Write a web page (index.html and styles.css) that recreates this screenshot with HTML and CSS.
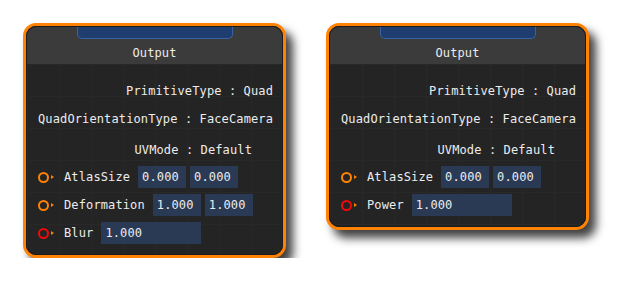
FILE: index.html
```html
<!DOCTYPE html>
<html lang="en">
<head>
    <meta charset="UTF-8">
    <meta name="viewport" content="width=device-width, initial-scale=1.0">
    <title>Output nodes</title>
    <link rel="stylesheet" href="styles.css">
</head>
<body>
    <div class="canvas">

        <div class="node">
            <div class="node-inner">
                <div class="node-header">
                    <div class="node-tab"></div>
                    <div class="node-title">Output</div>
                </div>
                <div class="node-body">
                    <div class="prop">PrimitiveType : Quad</div>
                    <div class="prop">QuadOrientationType : FaceCamera</div>
                    <div class="prop prop-short">UVMode : Default</div>

                    <div class="pin-row">
                        <span class="pin"></span>
                        <span class="pin-label">AtlasSize</span>
                        <span class="field">0.000</span>
                        <span class="field">0.000</span>
                    </div>
                    <div class="pin-row">
                        <span class="pin"></span>
                        <span class="pin-label">Deformation</span>
                        <span class="field">1.000</span>
                        <span class="field">1.000</span>
                    </div>
                    <div class="pin-row">
                        <span class="pin pin-red"></span>
                        <span class="pin-label">Blur</span>
                        <span class="field field-wide">1.000</span>
                    </div>
                </div>
            </div>
        </div>

        <div class="node">
            <div class="node-inner">
                <div class="node-header">
                    <div class="node-tab"></div>
                    <div class="node-title">Output</div>
                </div>
                <div class="node-body">
                    <div class="prop">PrimitiveType : Quad</div>
                    <div class="prop">QuadOrientationType : FaceCamera</div>
                    <div class="prop prop-short">UVMode : Default</div>

                    <div class="pin-row">
                        <span class="pin"></span>
                        <span class="pin-label">AtlasSize</span>
                        <span class="field">0.000</span>
                        <span class="field">0.000</span>
                    </div>
                    <div class="pin-row">
                        <span class="pin pin-red"></span>
                        <span class="pin-label">Power</span>
                        <span class="field field-wide">1.000</span>
                    </div>
                </div>
            </div>
        </div>

    </div>
</body>
</html>
```

FILE: styles.css
```css
body {
    margin: 0;
    padding: 0;
    background: #ffffff;
    font-family: 'DejaVu Sans Mono', 'Liberation Mono', monospace;
    font-size: 12px;
    letter-spacing: 0.12px;
    color: #ececec;
    white-space: nowrap;
}
.canvas {
    display: flex;
    align-items: flex-start;
    gap: 40px;
    padding: 23px 0 0 23px;
}
.node {
    width: 263px;
    box-sizing: border-box;
    border: 3px solid #ff8204;
    border-radius: 13px;
    background: #1b1b1b;
    box-shadow: 7px 8px 10px rgba(0,0,0,0.75);
}
.node-inner {
    border: 1px solid #1b1b1b;
    border-radius: 10px;
    overflow: hidden;
}
.node-header {
    background-color: #3b3b3b;
    padding-bottom: 1px;
}
.node-tab {
    width: 154px;
    height: 11px;
    margin: 0 auto;
    background-color: #1f3d6e;
    border: 1px solid #3a62a6;
    border-top: none;
    border-radius: 0 0 5px 5px;
}
.node-title {
    margin-top: 4px;
    line-height: 20px;
    text-align: center;
}
.node-body {
    background-color: #242424;
    background-image:
        linear-gradient(to right, #282828 1px, transparent 1px),
        linear-gradient(to bottom, #282828 1px, transparent 1px);
    background-size: 32px 32px;
    padding: 17px 9px 10px 11px;
}
.prop {
    text-align: right;
    line-height: 20px;
    margin-bottom: 8px;
}
/* margins collapse, so this one has to beat the 8px above */
.prop-short {
    padding-right: 21px;
    margin-top: 11px;
    margin-bottom: 6px;
}
.pin-row {
    display: flex;
    align-items: center;
    height: 22px;
    margin-bottom: 6px;
}
.pin-row:last-child {
    margin-bottom: 0;
}
.pin {
    width: 7px;
    height: 7px;
    border: 2px solid #ff8204;
    border-radius: 50%;
    position: relative;
    margin-right: 15px;
}
.pin::after {
    content: "";
    position: absolute;
    left: 11px;
    top: 1px;
    border-left: 3px solid #ff8204;
    border-top: 2.5px solid transparent;
    border-bottom: 2.5px solid transparent;
}
.pin-red {
    border-color: #f00a0a;
}
.pin-red::after {
    border-left-color: #ff8204;
}
.pin-label {
    margin-right: 8px;
}
.field {
    width: 44px;
    height: 22px;
    line-height: 22px;
    padding-left: 4px;
    background-color: #2a3a55;
    margin-right: 4px;
}
.field-wide {
    width: 96px;
}
```
